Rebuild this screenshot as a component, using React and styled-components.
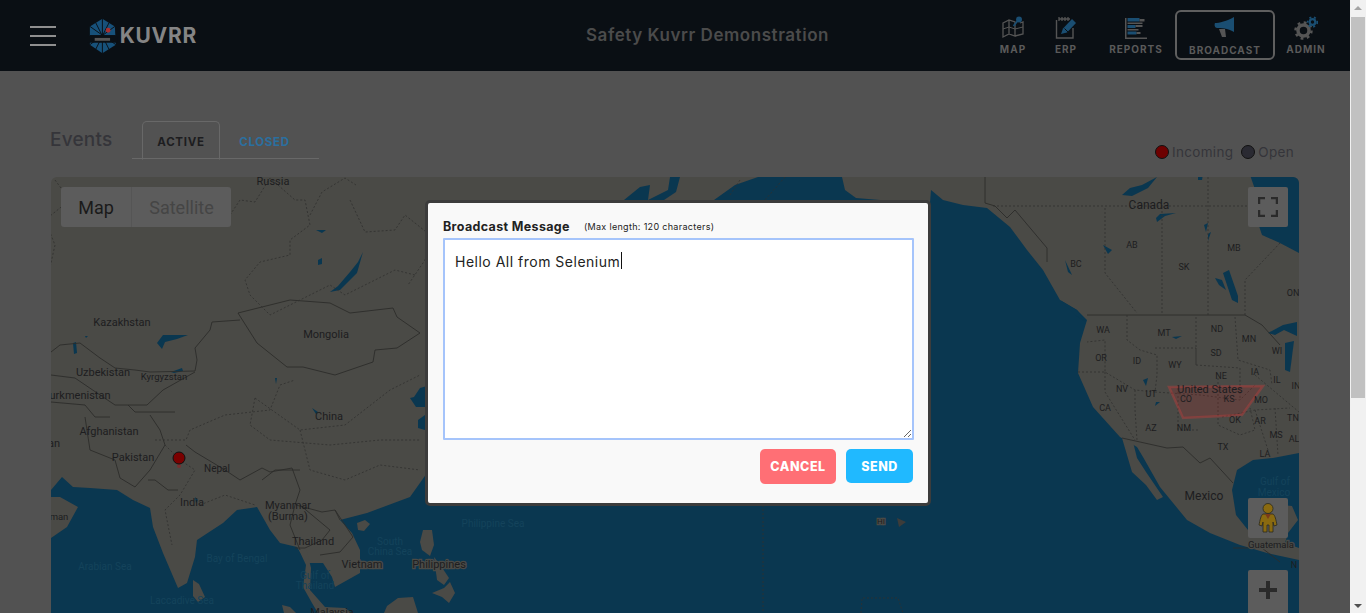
import React from "react";
import styled, { createGlobalStyle } from "styled-components";

const UI_FONT = `Inter, "Open Sans", "Liberation Sans", sans-serif`;

// the whole page sits under a modal, so these are the dimmed colours
const LAND_COLOR = "#4a4a46";
const SEA_COLOR = "#0a3750";
const HEADER_COLOR = "#0a0f14";
const PAGE_COLOR = "#525252";
const CONTROL_COLOR = "#5c5c5c";

const GlobalStyle = createGlobalStyle`
  html, body {
    margin: 0;
    padding: 0;
    height: 100%;
    overflow: hidden;
    background: #f1f1f1;
    font-family: ${UI_FONT};
  }
`;

const NAV_ITEMS = [
  { label: "MAP", width: 54, icon: "map" },
  { label: "ERP", width: 52, icon: "erp" },
  { label: "REPORTS", width: 83, icon: "reports", shift: 5 },
  { label: "BROADCAST", width: 100, icon: "broadcast", active: true },
  { label: "ADMIN", width: 62, icon: "admin" },
];

const LAND = [
  "298,548 306,565 303,587 312,603 318,613 352,613 345,608 325,607 310,590 311,568 306,548",
  "193,580 199,584 205,597 198,602 193,596",
  "357,523 365,520 370,524 364,531 358,530",
  "282,605 290,607 296,613 284,613",
  "387,606 398,598 413,597 418,613 384,613",
  "423,530 432,530 434,545 430,556 422,550 420,542",
  "434,557 441,566 449,578 444,585 437,580",
  "432,593 444,588 450,582 455,593 449,603 442,597",
  "1122,438 1133,442 1137,458 1146,472 1163,497 1157,500 1146,485 1132,472",
];

const LAKES = [
  "157,343 163,335 188,335 177,339 165,342 162,349",
  "73,343 76,342 77,353 74,354",
  "363,252 357,273 340,290 330,292 338,286 350,272 358,262",
  "85,336 88,336 86,338",
  "171,372 182,368 183,371 174,373",
  "414,397 420,388 427,386 427,407 416,407 410,398",
  "418,420 425,415 425,430 418,428",
  "1122,195 1130,188 1142,185 1157,177 1148,188 1132,196",
  "1156,218 1160,214 1176,213 1165,216 1157,222",
  "1223,273 1229,270 1238,296 1238,303 1232,300",
  "1215,278 1222,280 1226,290 1219,285",
  "1268,333 1283,325 1297,322 1297,336 1284,330 1275,335",
  "1285,343 1294,341 1290,372 1285,370",
  "1208,234 1211,232 1208,241",
  "1204,225 1208,223 1206,232",
  "1103,245 1108,254 1112,250",
  "1250,175 1299,175 1299,253 1280,243 1262,235 1257,220 1257,195",
  "1198,168 1204,168 1202,180 1198,180",
  "1060,300 1077,310 1086,322 1075,315",
  "1065,260 1072,275 1068,272",
  "195,497 198,500 196,503",
  "312,408 318,412 316,414",
  "1143,380 1148,378 1146,386",
  "1156,402 1160,402 1155,406",
  "1172,337 1182,336 1176,339",
  "275,378 277,378 276,384",
  "316,230 326,230 322,233",
  "318,260 322,258 322,264 318,265",
];

const SOLID_BORDERS = [
  "M51,352L60,345L80,343L100,358L115,368L135,370L150,372L195,371L197,360L195,348L210,330L212,322L240,320",
  "M238,313L257,343L287,367L303,367L335,375L373,362L375,350L397,348L420,333L397,317L393,308L350,313L330,303L290,300L238,313",
  "M51,375L75,378L100,395L115,405L128,405L147,405L163,390L195,372",
  "M128,405L135,412L150,412L175,412",
  "M51,402L85,405L95,417L110,417",
  "M85,417L90,450L115,460L120,478L135,487L150,470L165,445L160,430L150,415",
  "M148,480L155,480L168,490L178,490",
  "M186,445L195,452L225,470L240,480L262,468L270,472",
  "M262,480L275,470L300,470",
  "M270,472L292,468L300,490L295,505L290,525L300,550",
  "M296,505L322,512L335,510L340,520",
  "M300,505L330,530L322,540L305,548L295,548",
  "M335,510L345,525L353,537L340,552L320,555",
  "M1087,315L1245,315L1262,325L1280,345",
  "M985,177L985,203L995,206L1007,218L1015,210L1047,248L1047,262",
  "M1122,438L1167,448L1183,447L1200,463L1210,458L1233,483",
  "M1233,548L1262,548L1280,562",
];

const DASHED_BORDERS = [
  "M230,215L240,200L255,202L270,178L295,200L305,200L310,225L290,240L290,255L260,262L245,280L250,295L270,315L330,285L345,295L395,270L415,275",
  "M350,200L365,232L395,230L405,215L430,235L425,260L408,285",
  "M55,180L70,200L45,220L55,245L45,290",
  "M310,215L322,192L345,178L356,185",
  "M155,440L186,440L190,430L225,415L270,410L280,385L295,380",
  "M165,445L180,460L195,470L180,495L165,510L172,545",
  "M200,505L225,495L255,505",
  "M255,398L300,430L345,425L390,390L420,375",
  "M255,398L250,425L270,440L330,445L380,440L420,440",
  "M300,430L310,470L345,480L380,465L420,470",
  "M740,180L730,195",
  "M993,206L1263,206",
  "M1105,208L1105,273L1137,313",
  "M1162,207L1162,315",
  "M1208,177L1208,315",
  "M1245,315L1245,280L1280,243",
  "M1127,315L1127,340L1140,350L1157,355L1157,375L1155,392L1135,390L1105,372L1105,340L1087,342",
  "M1078,372L1105,372M1105,372L1105,392L1135,440",
  "M1135,390L1135,410L1137,440",
  "M1155,348L1196,348L1196,365M1155,392L1200,395L1240,400L1255,385",
  "M1196,317L1196,365L1240,368L1240,400",
  "M1235,317L1238,360L1270,370L1272,385",
  "M1198,430L1178,430L1178,385",
  "M1218,378L1218,425L1240,435L1255,430L1250,408",
  "M1222,417L1255,410L1290,408",
  "M1255,410L1268,450M1275,408L1278,455M1255,375L1299,412",
  "M763,505L763,613",
  "M861,613L862,598L898,598L903,613",
  "M785,177L765,200",
];

const MAP_LABELS = [
  ["Russia", 273, 185, 11],
  ["Canada", 1149, 209, 12],
  ["Kazakhstan", 122, 326, 11],
  ["Mongolia", 326, 338, 11],
  ["Uzbekistan", 103, 376, 11],
  ["Kyrgyzstan", 164, 380, 9.5],
  ["urkmenistan", 80, 399, 11],
  ["Afghanistan", 109, 435, 11],
  ["an", 54, 447, 11],
  ["Pakistan", 133, 461, 11],
  ["China", 329, 420, 11],
  ["Nepal", 217, 472, 10],
  ["India", 192, 506, 11],
  ["man", 59, 520, 9.5],
  ["Myanmar", 288, 509, 11],
  ["(Burma)", 288, 520, 11],
  ["Thailand", 313, 545, 11],
  ["Vietnam", 362, 568, 11, "halo"],
  ["Philippines", 439, 568, 11, "halo"],
  ["Malaysia", 332, 616, 11],
  ["Arabian Sea", 105, 570, 10, "sea"],
  ["Bay of Bengal", 237, 562, 10, "sea"],
  ["Laccadive Sea", 182, 604, 10, "sea"],
  ["Gulf of", 315, 579, 10, "sea"],
  ["Thailand", 315, 589, 10, "sea"],
  ["South", 390, 545, 10, "sea"],
  ["China Sea", 390, 555, 10, "sea"],
  ["Philippine Sea", 493, 527, 10, "sea"],
  ["Gulf of", 1275, 485, 10, "sea"],
  ["Mexico", 1274, 496, 10, "sea"],
  ["HI", 881, 524, 8, "halo"],
  ["AB", 1132, 248, 9],
  ["BC", 1076, 267, 9],
  ["SK", 1184, 270, 9],
  ["MB", 1234, 251, 9],
  ["ON", 1293, 296, 9],
  ["WA", 1103, 333, 9],
  ["MT", 1164, 336, 9],
  ["ND", 1217, 332, 9],
  ["MN", 1249, 342, 9],
  ["WI", 1277, 354, 9],
  ["OR", 1101, 361, 9],
  ["ID", 1137, 364, 9],
  ["WY", 1175, 368, 9],
  ["SD", 1216, 356, 9],
  ["IA", 1255, 375, 9],
  ["NE", 1221, 379, 9],
  ["IL", 1277, 383, 9],
  ["IN", 1296, 389, 9],
  ["NV", 1122, 392, 9],
  ["UT", 1151, 397, 9],
  ["CO", 1186, 402, 9],
  ["KS", 1229, 402, 9],
  ["MO", 1261, 403, 9],
  ["CA", 1105, 411, 9],
  ["AZ", 1151, 431, 9],
  ["NM", 1184, 431, 9],
  ["OK", 1235, 423, 9],
  ["AR", 1260, 424, 9],
  ["TN", 1293, 421, 9],
  ["MS", 1276, 438, 9],
  ["AL", 1294, 442, 9],
  ["TX", 1223, 450, 9],
  ["LA", 1265, 457, 9],
  ["United States", 1210, 393, 11],
  ["Mexico", 1204, 500, 12],
  ["Guatemala", 1271, 548, 9.5, "halo"],
  ["N", 1294, 568, 9],
];

const Viewport = styled.div`
  display: flex;
  width: 1366px;
  height: 613px;
  overflow: hidden;
`;

const Page = styled.div`
  position: relative;
  flex: 0 0 1350px;
  height: 613px;
  overflow: hidden;
  background: ${PAGE_COLOR};
`;

const Header = styled.header`
  display: flex;
  align-items: center;
  height: 71px;
  padding: 0 13px 0 30px;
  box-sizing: border-box;
  background: ${HEADER_COLOR};
`;

const Burger = styled.div`
  display: flex;
  flex-direction: column;
  gap: 7px;
  width: 26px;
  margin-right: 31px;
  span {
    height: 2px;
    background: #8f8f8f;
  }
`;

const Brand = styled.div`
  display: flex;
  align-items: center;
  gap: 2px;
  width: 110px;
  font-size: 21px;
  font-weight: 700;
  letter-spacing: 0.7px;
  color: #858585;
`;

const Title = styled.h1`
  margin: -2px 0 0 389px;
  font-size: 17px;
  font-weight: 600;
  letter-spacing: 0.55px;
  white-space: nowrap;
  color: #4b4b4b;
`;

const Nav = styled.nav`
  display: flex;
  align-items: center;
  margin-left: auto;
`;

const NavItem = styled.div`
  display: flex;
  flex-direction: column;
  align-items: center;
  box-sizing: border-box;
  width: ${(p) => p.$width}px;
  height: ${(p) => (p.$active ? "50px" : "auto")};
  padding-top: ${(p) => (p.$active ? "5px" : "0")};
  padding-left: ${(p) => p.$shift || 0}px;
  margin-top: -1px;
  border: ${(p) => (p.$active ? "2px solid #5f5f5f" : "none")};
  border-radius: 6px;
  font-size: 10px;
  font-weight: 700;
  letter-spacing: 1px;
  color: #5a5a5a;
  svg {
    display: block;
    margin-bottom: ${(p) => (p.$active ? "7px" : "3px")};
  }
`;

const Main = styled.main`
  padding: 50px 51px 0;
`;

const TopRow = styled.div`
  display: flex;
  align-items: flex-end;
  height: 38px;
`;

const Heading = styled.h2`
  align-self: center;
  width: 82px;
  margin: -1px 0 0 -1px;
  font-size: 19px;
  font-weight: 500;
  letter-spacing: 0.2px;
  color: #35353a;
`;

const Tabs = styled.div`
  display: flex;
  width: 187px;
  height: 38px;
  padding-left: 10px;
  box-sizing: border-box;
  border-bottom: 1px solid #686868;
`;

const Tab = styled.div`
  display: flex;
  align-items: center;
  justify-content: center;
  box-sizing: border-box;
  width: ${(p) => (p.$active ? "78px" : "89px")};
  height: 39px;
  padding-top: 2px;
  border: 1px solid ${(p) => (p.$active ? "#686868" : "transparent")};
  border-bottom: 1px solid ${(p) => (p.$active ? PAGE_COLOR : "transparent")};
  border-radius: 5px 5px 0 0;
  font-size: 11.5px;
  font-weight: 700;
  letter-spacing: 0.7px;
  color: ${(p) => (p.$active ? "#1d1d20" : "#2b6f9f")};
`;

const Legend = styled.div`
  display: flex;
  align-items: center;
  margin: 0 5px 0 auto;
  height: 14px;
  font-size: 13.5px;
  letter-spacing: 0.32px;
  color: #35353a;
`;

const LegendDot = styled.span`
  box-sizing: border-box;
  width: 14px;
  height: 14px;
  margin: 0 3px 0 ${(p) => (p.$first ? "0" : "8px")};
  border: 1px solid #111;
  border-radius: 50%;
  background: ${(p) => p.$color};
`;

const MapCard = styled.section`
  position: relative;
  height: 480px;
  margin-top: 18px;
  overflow: hidden;
  border-radius: 6px 6px 0 0;
  background: ${LAND_COLOR};
  svg.base {
    display: block;
  }
`;

const MapText = styled.text`
  font-family: Roboto, "Liberation Sans", sans-serif;
  font-size: ${(p) => p.$size}px;
  text-anchor: middle;
  fill: ${(p) => (p.$kind === "sea" ? "#14435b" : "#1d1d20")};
  ${(p) =>
    p.$kind === "halo" ? `paint-order: stroke; stroke: ${LAND_COLOR}; stroke-width: 2.5px;` : ""}
`;

const ControlGroup = styled.div`
  position: absolute;
  top: 10px;
  left: 10px;
  display: flex;
  height: 40px;
  border-radius: 3px;
  background: ${CONTROL_COLOR};
  font-family: Roboto, "Liberation Sans", sans-serif;
  font-size: 18px;
`;

const MapType = styled.div`
  display: flex;
  align-items: center;
  justify-content: center;
  width: ${(p) => p.$width}px;
  color: ${(p) => (p.$active ? "#1a1a1a" : "#454545")};
  border-right: ${(p) => (p.$active ? "1px solid #555" : "none")};
`;

const MapButton = styled.div`
  position: absolute;
  right: 11px;
  top: ${(p) => p.$top}px;
  display: flex;
  align-items: ${(p) => (p.$pinned ? "flex-start" : "center")};
  justify-content: center;
  box-sizing: border-box;
  width: 40px;
  height: ${(p) => p.$height || 40}px;
  padding-top: ${(p) => (p.$pinned ? "10px" : "0")};
  border-radius: 2px;
  background: ${CONTROL_COLOR};
`;

const DialogLayer = styled.div`
  position: absolute;
  inset: 0;
  padding: 200px 0 0 425px;
`;

const Dialog = styled.div`
  box-sizing: border-box;
  width: 506px;
  height: 306px;
  padding: 15px 14px 0 15px;
  border: 3px solid #3c3c3c;
  border-radius: 5px;
  background: #f9f9f9;
`;

const DialogTitle = styled.div`
  display: flex;
  align-items: center;
  height: 17px;
  margin-bottom: 3px;
  font-size: 12.5px;
  font-weight: 700;
  letter-spacing: 0.35px;
  color: #222;
  small {
    margin-left: 14px;
    font-size: 9px;
    font-weight: 400;
    letter-spacing: 0.32px;
  }
`;

const EditorWrap = styled.div`
  position: relative;
  height: 202px;
`;

const Message = styled.textarea`
  display: block;
  box-sizing: border-box;
  width: 471px;
  height: 202px;
  padding: 13px 10px;
  border: 2px solid #a5c4fb;
  outline: none;
  border-radius: 1px;
  resize: both;
  background: #fff;
  caret-color: transparent;
  font-family: ${UI_FONT};
  font-size: 14px;
  line-height: 17px;
  letter-spacing: 0.5px;
  color: #222;
`;

const Caret = styled.span`
  position: absolute;
  left: 178px;
  top: 14px;
  width: 1px;
  height: 17px;
  background: #111;
`;

const Actions = styled.div`
  display: flex;
  justify-content: flex-end;
  gap: 10px;
  margin: 9px 1px 0 0;
`;

const ActionButton = styled.button`
  width: ${(p) => p.$width}px;
  height: ${(p) => p.$height}px;
  padding: 0;
  border: none;
  border-radius: 5px;
  background: ${(p) => p.$color};
  color: #fff;
  font-family: ${UI_FONT};
  font-size: 12.5px;
  font-weight: 800;
  letter-spacing: 0.55px;
`;

const ScrollBar = styled.div`
  flex: 0 0 16px;
  height: 613px;
  position: relative;
  background: #f1f1f1;
`;

const ScrollThumb = styled.div`
  position: absolute;
  top: 17px;
  left: 1px;
  width: 14px;
  height: 381px;
  background: #c1c1c1;
`;

const ScrollArrow = styled.div`
  position: absolute;
  left: 4px;
  ${(p) => (p.$up ? "top: 6px;" : "bottom: 5px;")}
  width: 0;
  height: 0;
  border-left: 4px solid transparent;
  border-right: 4px solid transparent;
  ${(p) => (p.$up ? "border-bottom: 4px solid #a3a3a3;" : "border-top: 4px solid #505050;")}
`;

const LogoMark = () => (
  <svg width="31" height="38" viewBox="0 0 32 38">
    <polygon points="16,1 29,9 30,28 16,37 3,28 3,9" fill="#17517a" />
    <g stroke={HEADER_COLOR} strokeWidth="1" fill="none">
      <path d="M16,1V37M3,9L30,28M29,9L3,28M3,18.500H30M9,5L23,33M23,5L9,33" />
    </g>
    <rect x="0" y="19" width="32" height="7" fill={HEADER_COLOR} />
    <rect x="8" y="21" width="16" height="3" fill="#555" />
    <circle cx="22" cy="13" r="2.500" fill="#a83030" />
  </svg>
);

const NavIcon = ({ name }) => {
  const grey = "#555";
  const blue = "#1a4e72";
  if (name === "map") {
    return (
      <svg width="24" height="24" viewBox="0 0 24 24" fill="none">
        <path d="M2,7L8,4L14,6L14,20L8,18L2,21ZM8,4V18M14,20L22,18V6L19,7" stroke={grey} strokeWidth="1.300" />
        <path d="M2,13L8,11L14,13L22,11" stroke={grey} strokeWidth="1" />
        <circle cx="18" cy="3.500" r="3" fill={blue} />
        <path d="M16.500,5L12.500,10" stroke={blue} strokeWidth="1.800" />
      </svg>
    );
  }
  if (name === "erp") {
    return (
      <svg width="24" height="24" viewBox="0 0 24 24" fill="none">
        <path d="M5,3H16M2.500,4V22H19V12" stroke={grey} strokeWidth="1.400" />
        <path d="M5,1V5M8,1V5M11,1V5M14,1V5" stroke={grey} strokeWidth="1.300" />
        <path d="M7,18L9,12.500L18,3L22,7L13,16.500Z" fill={blue} />
        <path d="M10.500,12.500L14,16" stroke={HEADER_COLOR} strokeWidth="1" />
      </svg>
    );
  }
  if (name === "reports") {
    return (
      <svg width="24" height="24" viewBox="0 0 24 24">
        <rect x="1" y="2" width="1.500" height="21" fill={grey} />
        <rect x="1" y="21.500" width="22" height="1.500" fill={grey} />
        <rect x="3.500" y="2" width="12" height="3.500" fill={blue} />
        <rect x="15.500" y="3" width="5" height="2.500" fill={grey} />
        <rect x="3.500" y="6.500" width="15" height="1.500" fill={grey} />
        <rect x="3.500" y="9" width="8" height="3" fill={blue} />
        <rect x="11.500" y="9" width="7" height="2" fill={grey} />
        <rect x="3.500" y="13" width="11" height="1.500" fill={grey} />
        <rect x="3.500" y="15.500" width="9" height="3" fill={blue} />
        <rect x="12.500" y="16" width="4" height="2" fill={grey} />
      </svg>
    );
  }
  if (name === "broadcast") {
    return (
      <svg width="22" height="20" viewBox="0 0 22 20">
        <path d="M1,6C5,6 13,4 20,0V15C14,11 6,11 3,11C1,11 0,8 1,6Z" fill={blue} />
        <path d="M5,12H11L12,20H8Z" fill={grey} />
      </svg>
    );
  }
  return (
    <svg width="24" height="24" viewBox="0 0 24 24">
      <circle cx="9.500" cy="14.500" r="5.500" fill="none" stroke={grey} strokeWidth="3.500" />
      <circle cx="9.500" cy="14.500" r="8" fill="none" stroke={grey} strokeWidth="2.500" strokeDasharray="2.800 3.480" />
      <circle cx="18.500" cy="6" r="2.800" fill="none" stroke={blue} strokeWidth="2.200" />
      <circle cx="18.500" cy="6" r="4.800" fill="none" stroke={blue} strokeWidth="1.800" strokeDasharray="2 2.700" />
    </svg>
  );
};

const WorldMap = () => (
  <svg className="base" width="1248" height="480" viewBox="51 177 1248 480">
    <path
      fill={SEA_COLOR}
      d="M51,490L62,477L73,487L90,488L117,490L133,500L150,508L153,527L163,553L178,588L187,583L195,557L197,540L223,523L237,510L257,507L270,530L280,543L297,547L307,563L323,563L332,577L335,587L360,573L360,550L352,533L340,520L367,513L410,497L427,473L430,400L500,300L624,200L640,187L650,185L648,200L668,190L670,177L680,177L676,192L664,200L714,200L735,185L758,177L842,177L845,190L856,198L880,200L930,203L931,190L943,200L963,205L987,208L1010,227L1027,250L1043,270L1060,300L1077,310L1087,320L1080,343L1078,373L1093,407L1120,437L1137,447L1143,457L1160,487L1187,520L1210,533L1240,545L1267,553L1299,560L1299,657L51,657L51,538L67,527L78,507L60,497L51,497Z"
    />
    <path
      fill={SEA_COLOR}
      d="M1299,453L1273,458L1253,460L1237,470L1232,490L1236,515L1248,530L1262,535L1272,528L1282,505L1292,506L1298,520L1288,533L1285,543L1299,548Z"
    />
    {LAND.map((points) => (
      <polygon key={points} points={points} fill={LAND_COLOR} />
    ))}
    {LAKES.map((points) => (
      <polygon key={points} points={points} fill={SEA_COLOR} />
    ))}
    <g fill="none" stroke="#2c2c2a" strokeWidth="0.900">
      {SOLID_BORDERS.map((d) => (
        <path key={d} d={d} />
      ))}
    </g>
    <g fill="none" stroke="#30302e" strokeWidth="0.800" strokeDasharray="2 2">
      {DASHED_BORDERS.map((d) => (
        <path key={d} d={d} />
      ))}
    </g>
    <polygon
      points="1169,387 1263,386 1242,415 1183,418"
      fill="rgba(200,30,30,0.17)"
      stroke="rgba(220,60,60,0.32)"
      strokeWidth="2.500"
    />
    {MAP_LABELS.map(([text, x, y, size, kind]) => (
      <MapText key={text + x} x={x} y={y} $size={size} $kind={kind}>
        {text}
      </MapText>
    ))}
    <polygon points="897,518 906,522 899,527" fill="#3c3c3a" />
    <circle cx="179" cy="466" r="2" fill="#7a3030" />
    <circle cx="179" cy="458" r="6" fill="#7a0000" stroke="#111" strokeWidth="1" />
  </svg>
);

const Pegman = () => (
  <svg width="22" height="30" viewBox="0 0 22 30">
    <circle cx="11" cy="5.500" r="5" fill="#8a6a10" stroke="#2a2a20" strokeWidth="0.800" />
    <path
      d="M6,11H16C18,12 19,17 20,22L17,23L16,19V29H12V22H10V29H6V19L5,23L2,22C3,17 4,12 6,11Z"
      fill="#8a6a10"
      stroke="#2a2a20"
      strokeWidth="0.800"
    />
    <path d="M8,11L11,16L14,11Z" fill="#7a3a1a" />
  </svg>
);

const App = () => (
  <>
    <GlobalStyle />
    <Viewport>
      <Page>
        <Header>
          <Burger>
            <span />
            <span />
            <span />
          </Burger>
          <Brand>
            <LogoMark />
            KUVRR
          </Brand>
          <Title>Safety Kuvrr Demonstration</Title>
          <Nav>
            {NAV_ITEMS.map((item) => (
              <NavItem key={item.label} $width={item.width} $active={item.active} $shift={item.shift}>
                <NavIcon name={item.icon} />
                {item.label}
              </NavItem>
            ))}
          </Nav>
        </Header>

        <Main>
          <TopRow>
            <Heading>Events</Heading>
            <Tabs>
              <Tab $active>ACTIVE</Tab>
              <Tab>CLOSED</Tab>
            </Tabs>
            <Legend>
              <LegendDot $first $color="#6e0000" />
              Incoming
              <LegendDot $color="#2a2a32" />
              Open
            </Legend>
          </TopRow>
          <MapCard>
            <WorldMap />
            <ControlGroup>
              <MapType $active $width={70}>
                Map
              </MapType>
              <MapType $width={99}>Satellite</MapType>
            </ControlGroup>
            <MapButton $top={10}>
              <svg width="20" height="20" viewBox="0 0 20 20" fill="none" stroke="#2a2a2a" strokeWidth="2.500">
                <path d="M1,7V1H7M13,1H19V7M19,13V19H13M7,19H1V13" />
              </svg>
            </MapButton>
            <MapButton $top={321}>
              <Pegman />
            </MapButton>
            <MapButton $top={393} $height={80} $pinned>
              <svg width="20" height="20" viewBox="0 0 20 20">
                <path d="M8,1H12V8H19V12H12V19H8V12H1V8H8Z" fill="#2a2a2a" />
              </svg>
            </MapButton>
          </MapCard>
        </Main>

        <DialogLayer>
          <Dialog>
            <DialogTitle>
              Broadcast Message
              <small>(Max length: 120 characters)</small>
            </DialogTitle>
            <EditorWrap>
              <Message readOnly value="Hello All from Selenium" />
              <Caret />
            </EditorWrap>
            <Actions>
              <ActionButton $width={76} $height={35} $color="#ff6f75">
                CANCEL
              </ActionButton>
              <ActionButton $width={67} $height={34} $color="#20b9ff">
                SEND
              </ActionButton>
            </Actions>
          </Dialog>
        </DialogLayer>
      </Page>
      <ScrollBar>
        <ScrollArrow $up />
        <ScrollThumb />
        <ScrollArrow />
      </ScrollBar>
    </Viewport>
  </>
);

export default App;
